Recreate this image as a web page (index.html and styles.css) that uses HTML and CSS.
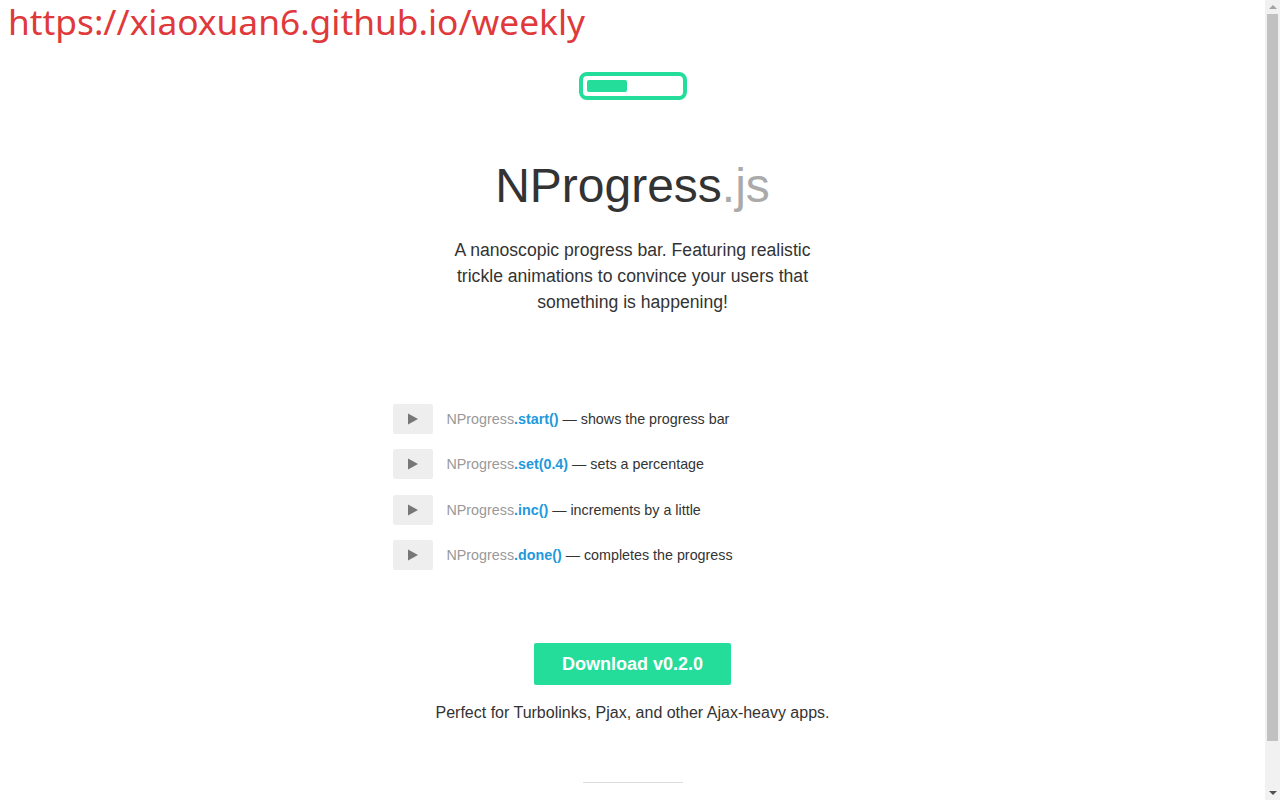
FILE: index.html
```html
<!DOCTYPE html>
<html lang="en">
<head>
<meta charset="utf-8">
<title>NProgress: slim progress bars in JavaScript</title>
<link rel="stylesheet" href="styles.css">
</head>
<body>
<div class="url">https://xiaoxuan6.github.io/weekly</div>
<div class="page">
  <div class="logo"><span class="logo-fill"></span></div>
  <h1 class="title">NProgress<span class="ext">.js</span></h1>
  <p class="tagline">A nanoscopic progress bar. Featuring realistic trickle animations to convince your users that something is happening!</p>

  <ul class="actions">
    <li class="action">
      <button class="play" type="button"><svg width="12" height="12" viewBox="0 0 12 12"><polygon points="1,0.5 11,6 1,11.5" fill="#777"/></svg></button>
      <span class="desc"><span class="obj">NProgress</span><b class="fn">.start()</b> — shows the progress bar</span>
    </li>
    <li class="action">
      <button class="play" type="button"><svg width="12" height="12" viewBox="0 0 12 12"><polygon points="1,0.5 11,6 1,11.5" fill="#777"/></svg></button>
      <span class="desc"><span class="obj">NProgress</span><b class="fn">.set(0.4)</b> — sets a percentage</span>
    </li>
    <li class="action">
      <button class="play" type="button"><svg width="12" height="12" viewBox="0 0 12 12"><polygon points="1,0.5 11,6 1,11.5" fill="#777"/></svg></button>
      <span class="desc"><span class="obj">NProgress</span><b class="fn">.inc()</b> — increments by a little</span>
    </li>
    <li class="action">
      <button class="play" type="button"><svg width="12" height="12" viewBox="0 0 12 12"><polygon points="1,0.5 11,6 1,11.5" fill="#777"/></svg></button>
      <span class="desc"><span class="obj">NProgress</span><b class="fn">.done()</b> — completes the progress</span>
    </li>
  </ul>

  <a class="download" href="#">Download v0.2.0</a>
  <p class="perfect">Perfect for Turbolinks, Pjax, and other Ajax-heavy apps.</p>
  <hr class="rule">
  <div class="spacer"></div>
</div>
<div class="scrollbar" aria-hidden="true">
  <span class="sb-up"></span>
  <span class="sb-thumb"></span>
  <span class="sb-down"></span>
</div>
</body>
</html>
```
FILE: styles.css
```css
html, body {
  margin: 0;
  padding: 0;
  background: #fff;
}
body {
  font-family: "Liberation Sans", Arial, sans-serif;
  color: #333;
}
.url {
  position: absolute;
  top: 1px;
  left: 8px;
  font-family: "Noto Sans", "Liberation Sans", sans-serif;
  font-size: 35.3px;
  line-height: 40px;
  color: #e0393b;
  z-index: 2;
}
.page {
  text-align: center;
  padding-top: 72px;
  margin-right: 15px;
}
.logo {
  display: inline-block;
  box-sizing: border-box;
  width: 108px;
  height: 28px;
  border: 4px solid #24dd9a;
  border-radius: 8px;
  padding: 4px;
  text-align: left;
  vertical-align: top;
}
.logo-fill {
  display: block;
  width: 40px;
  height: 12px;
  background: #24dd9a;
  border-radius: 2px;
}
.title {
  margin: 57px 0 0;
  font-size: 48px;
  line-height: 58px;
  font-weight: normal;
  color: #333;
}
.ext {
  color: #aaa;
}
.tagline {
  margin: 22px auto 0;
  width: 370px;
  font-size: 17.6px;
  line-height: 26px;
  color: #333;
}
.actions {
  list-style: none;
  margin: 89px auto 0;
  padding: 0;
  width: 480px;
  text-align: left;
  display: flex;
  flex-direction: column;
  gap: 15.4px;
}
.action {
  display: flex;
  align-items: center;
  height: 30px;
  font-size: 14.3px;
  color: #333;
}
.desc {
  white-space: nowrap;
}
.play {
  width: 40px;
  height: 30px;
  margin: 0 14px 0 0;
  padding: 0;
  border: 0;
  border-radius: 2px;
  background: #eee;
  display: flex;
  align-items: center;
  justify-content: center;
}
.obj {
  color: #999;
}
.fn {
  color: #2299dd;
  font-weight: bold;
}
.download {
  display: inline-block;
  margin-top: 73px;
  width: 197px;
  height: 42px;
  line-height: 42px;
  background: #24dd9a;
  color: #fff;
  font-weight: bold;
  font-size: 18px;
  text-decoration: none;
  border-radius: 2px;
}
.perfect {
  margin: 18px 0 0;
  font-size: 16px;
  line-height: 20px;
  color: #333;
}
.rule {
  width: 100px;
  margin: 59px auto 0;
  border: 0;
  border-top: 1px solid #ddd;
  height: 0;
}
.spacer {
  height: 66px;
}
.scrollbar {
  position: fixed;
  top: 0;
  right: 0;
  bottom: 0;
  width: 15px;
  background: #f1f1f1;
  display: flex;
  flex-direction: column;
  z-index: 5;
}
.sb-up,
.sb-down {
  flex: none;
  height: 14px;
  display: flex;
  align-items: center;
  justify-content: center;
}
.sb-down {
  margin-top: auto;
  height: 15px;
}
.sb-up::before {
  content: "";
  width: 0;
  height: 0;
  border-left: 4px solid transparent;
  border-right: 4px solid transparent;
  border-bottom: 4px solid #a3a3a3;
}
.sb-down::before {
  content: "";
  width: 0;
  height: 0;
  border-left: 4px solid transparent;
  border-right: 4px solid transparent;
  border-top: 4px solid #505050;
}
.sb-thumb {
  flex: none;
  margin: 0 2px;
  height: 727px;
  background: #c1c1c1;
}
```
